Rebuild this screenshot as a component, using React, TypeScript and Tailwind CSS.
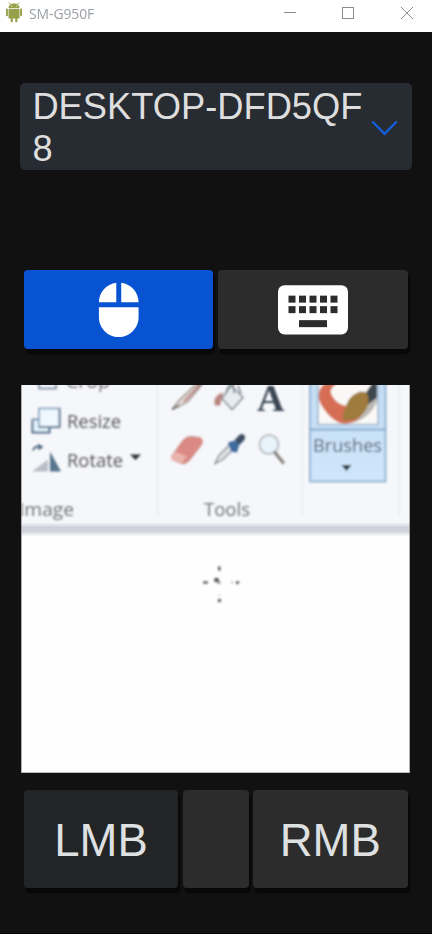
import React from "react";

function TitleBar() {
  return (
    <header className="flex h-8 shrink-0 items-start bg-white">
      <svg className="ml-[5px] mt-[2px] h-[21px] w-[18px]" viewBox="0 0 18 21" fill="#97a04b">
        <path d="M4 0.5 5.7 2.5M14 0.5 12.3 2.5" stroke="#97a04b" strokeWidth="1" />
        <path d="M3.5 6.2C3.5 3.5 5.7 1.5 9 1.5s5.5 2 5.5 4.7z" />
        <rect x="3.5" y="7" width="11" height="9.4" rx="0.7" />
        <rect x="1" y="6.6" width="1.9" height="7.6" rx="0.8" />
        <rect x="15.1" y="6.6" width="1.9" height="7.6" rx="0.8" />
        <rect x="5.6" y="15" width="2.2" height="5.2" rx="0.9" />
        <rect x="10.2" y="15" width="2.2" height="5.2" rx="0.9" />
        <circle cx="6.7" cy="4.1" r="0.5" fill="#fff" />
        <circle cx="11.3" cy="4.1" r="0.5" fill="#fff" />
      </svg>
      <span className="ml-[6px] mt-[3px] origin-left scale-x-[0.93] font-['Open_Sans','Noto_Sans',sans-serif] text-[15px] leading-5 tracking-[-0.1px] text-[#9a9fa6]">
        SM-G950F
      </span>
      <svg className="ml-auto mr-[18px] mt-[6px] h-[14px] w-[131px]" viewBox="0 0 131 14" fill="none" stroke="#8c8c8c">
        <path d="M1 6.5h12" />
        <rect x="59.5" y="1.5" width="11" height="11" />
        <path d="M118 1l12 12M130 1L118 13" />
      </svg>
    </header>
  );
}

function MouseIcon() {
  return (
    <svg className="h-[59.500px] w-[59.500px]" viewBox="0 0 24 24" fill="#fff">
      <path d="M13 1.07V9h7c0-4.08-3.05-7.44-7-7.93zM4 15c0 4.42 3.58 8 8 8s8-3.58 8-8v-4H4v4zm7-13.93C7.05 1.56 4 4.92 4 9h7V1.07z" />
    </svg>
  );
}

function KeyboardIcon() {
  const columns = [3, 6, 9, 12, 15];
  return (
    <svg className="h-[50px] w-[70px]" viewBox="0 0 20 14.2">
      <rect width="20" height="14.1" rx="1.9" fill="#fff" />
      {columns.map((x) => (
        <g key={x} fill="#2c2c2c">
          <rect x={x} y="3" width="2" height="2" />
          <rect x={x} y="6" width="2" height="2" />
        </g>
      ))}
      <rect x="6" y="10" width="8" height="2" fill="#2c2c2c" />
    </svg>
  );
}

function RemoteView() {
  return (
    <svg
      className="ml-[21px] mt-[35.500px] block h-[388px] w-[389px] shrink-0"
      viewBox="21 385.5 389 388"
      fontFamily="'Open Sans','Noto Sans',sans-serif"
    >
      <defs>
        <filter id="soft" x="-5%" y="-5%" width="110%" height="110%">
          <feGaussianBlur stdDeviation="0.8" />
        </filter>
        <linearGradient id="ribbonEdge" x1="0" y1="0" x2="0" y2="1">
          <stop offset="0" stopColor="#f4f5f8" />
          <stop offset="0.35" stopColor="#ccd1d9" />
          <stop offset="0.65" stopColor="#d0d5dd" />
          <stop offset="1" stopColor="#fefefe" />
        </linearGradient>
        <linearGradient id="brushBg" x1="0" y1="0" x2="0" y2="1">
          <stop offset="0" stopColor="#c4ddf3" />
          <stop offset="1" stopColor="#cfe5fa" />
        </linearGradient>
      </defs>
      <rect x="21" y="384" width="389" height="390" fill="#fefefe" />
      <rect x="21" y="384" width="389" height="140" fill="#f6f7fa" />
      <rect x="21" y="523" width="389" height="14" fill="url(#ribbonEdge)" />

      <g filter="url(#soft)">
        <g stroke="#e7eaef" strokeWidth="1.5">
          <path d="M157.500 380V517M302.500 380V517M399 380V517" />
        </g>
        <path d="M39 384v5h17M56 380v10" stroke="#8d9caf" strokeWidth="2" fill="none" />
        <text x="66" y="388.500" fontSize="18" fill="#777" textLength="44" lengthAdjust="spacingAndGlyphs">Crop</text>

        <rect x="32.500" y="420" width="17" height="13" fill="#e3f1fb" stroke="#647b95" strokeWidth="1.7" />
        <rect x="39" y="409" width="20.500" height="18.500" fill="#eff8ff" stroke="#7b9ab9" strokeWidth="1.6" />
        <path d="M59.500 409v18.500H39M49.500 428v5h-17v-11" stroke="#4e6885" strokeWidth="1.6" fill="none" />
        <text x="67" y="428" fontSize="18" fill="#565656" textLength="54" lengthAdjust="spacingAndGlyphs">Resize</text>

        <path d="M33 451c1-4 5-5 8-3" stroke="#546d85" strokeWidth="2" fill="none" />
        <path d="M38 444l5.500 3.500-5 3.500z" fill="#546d85" />
        <path d="M32 472l16-12v12z" fill="#b7bfc7" />
        <path d="M50 452l11 20H50z" fill="#58758e" />
        <text x="67" y="467.500" fontSize="18" fill="#565656" textLength="56" lengthAdjust="spacingAndGlyphs">Rotate</text>
        <path d="M130 455h11l-5.500 5.500z" fill="#333" />
        <text x="19" y="516" fontSize="18" fill="#707276" textLength="55" lengthAdjust="spacingAndGlyphs">Image</text>
        <text x="204" y="516" fontSize="18" fill="#707276" textLength="46" lengthAdjust="spacingAndGlyphs">Tools</text>

        <path d="M172 410l8-10 16-15h6l-14 17-9 5z" fill="#e2dad7" stroke="#928783" strokeWidth="1.300" />
        <path d="M184 402l16-17" stroke="#b66f66" strokeWidth="1.800" />
        <path d="M172 410l7-4" stroke="#77736f" strokeWidth="1.800" />
        <path d="M222 399l9-13 12 12-11 12z" fill="#e6edf3" stroke="#899097" strokeWidth="1.600" />
        <path d="M226 394c2-9 5-10 7-10l1 10M238 386l3 8" stroke="#7d858d" fill="none" strokeWidth="1.500" />
        <path d="M215 406c-2-6 1-11 8-13l-1 6-2 7z" fill="#b98780" />
        <text x="257" y="411" fontFamily="'Liberation Serif',serif" fontWeight="700" fontSize="38" fill="#3a4655">A</text>

        <path d="M172 456l10-14c3-4 6-5 10-5l8 1c3 2 3 5 1 8l-10 13c-3 4-6 6-10 5l-7-3c-2-1-3-3-2-5z" fill="#db8983" stroke="#c99995" />
        <path d="M172 456l3-4 12 5-6 7-8-3c-2-1-2-3-1-5z" fill="#e9b4ac" />
        <path d="M215 464l4-8 12-12 4 4-12 12z" fill="#dfe3e6" stroke="#858b90" strokeWidth="1.300" />
        <path d="M228 443l7-2 4-5c3-3 8 0 5 5l-5 5-2 7-6-1z" fill="#3f6b9e" />
        <path d="M235 440l4-4c3-3 8 0 5 4l-5 5z" fill="#405060" />
        <circle cx="269" cy="445" r="9.500" fill="#e8f3fa" stroke="#bac1c8" strokeWidth="2" />
        <path d="M275 453l8 10" stroke="#8d8884" strokeWidth="3.500" strokeLinecap="round" />

        <rect x="310" y="378" width="75.500" height="104" fill="url(#brushBg)" stroke="#8bafd2" strokeWidth="1.800" />
        <path d="M310 430h75" stroke="#86abce" strokeWidth="1.800" />
        <rect x="318" y="375" width="60" height="50" fill="#faf9f7" stroke="#9bb4ce" strokeWidth="1.500" />
        <path d="M362 400l10-14h5v16c-4 10-13 19-24 21l-9-1z" fill="#bdb9b4" />
        <path d="M364 396l8-12h5v14l-9 7z" fill="#3e474e" />
        <path d="M325 384c-7 5-8 13-4 21 5 9 13 17 21 19 9 1 17-3 20-10l-10-9c-8 4-17-2-21-11-1-5 2-7 6-10z" fill="#d66e55" />
        <path d="M343 421c-1-4 0-9 3-14 2-8 8-14 16-15 8 0 8 11 4 18-4 8-14 12-23 11z" fill="#9e7b3c" />
        <text x="313" y="452.500" fontSize="18" fill="#525d70" textLength="69" lengthAdjust="spacingAndGlyphs">Brushes</text>
        <path d="M341.500 465.500h10l-5 6z" fill="#25303c" />

        <g fill="#555">
          <ellipse cx="219.300" cy="569" rx="1.300" ry="2.600" />
          <ellipse cx="216.500" cy="580.500" rx="2.500" ry="2.200" />
          <ellipse cx="219" cy="583" rx="1.500" ry="1.500" fill="#888" />
          <ellipse cx="205.500" cy="583" rx="2.700" ry="1.300" />
          <ellipse cx="237.500" cy="583" rx="1.700" ry="1.500" />
          <circle cx="232" cy="583" r="1" fill="#aaa" />
          <circle cx="219.500" cy="601" r="1.700" />
          <circle cx="219.500" cy="596" r="1" fill="#ccc" />
        </g>
      </g>
      <path d="M21 773.200h389M21.500 384v389M409.500 384v389" stroke="#8b8b8b" strokeWidth="0.700" />
    </svg>
  );
}

export default function App() {
  return (
    <div className="flex h-[934px] w-[432px] flex-col overflow-hidden bg-[#111111] font-['Liberation_Sans',Arial,sans-serif]">
      <TitleBar />
      <button className="ml-[19.500px] mt-[51px] flex h-[86.500px] w-[392px] shrink-0 items-center rounded-[5px] bg-[#272c32] pl-[12.900px] text-left">
        <span className="w-[338.500px] shrink-0 break-all pt-[4px] text-[36.300px] leading-[42px] text-[#dedede]">
          DESKTOP-DFD5QF<br />8
        </span>
        <svg className="mt-[4px] h-[16px] w-[27px] shrink-0" viewBox="0 0 27 16" fill="none" stroke="#1260df" strokeWidth="2.300">
          <path d="M1.300 1.500 13.500 13.800 25.700 1.500" />
        </svg>
      </button>

      <div className="ml-[23.500px] mt-[100.500px] flex h-[79px] w-[384px] shrink-0 gap-[4.500px]">
        <button className="flex flex-1 items-center justify-center rounded-[4px] bg-[#0753d2] shadow-[2px_5px_1px_#080808]">
          <MouseIcon />
        </button>
        <button className="flex flex-1 items-center justify-center rounded-[4px] bg-[#2c2c2c] shadow-[2px_5px_1px_#080808]">
          <KeyboardIcon />
        </button>
      </div>

      <RemoteView />

      <div className="ml-[24px] mt-[17.500px] flex h-[98px] w-[383.500px] shrink-0 gap-[4.500px] text-[45.500px] leading-none text-[#dfe0e1]">
        <button className="flex w-[154px] items-center justify-center rounded-[4px] bg-[#232425] pt-[3px] shadow-[2px_5px_1px_#080808]">
          LMB
        </button>
        <button className="flex-1 rounded-[4px] bg-[#2c2c2c] shadow-[2px_5px_1px_#080808]" />
        <button className="flex w-[154.500px] items-center justify-center rounded-[4px] bg-[#2c2c2c] pt-[3px] shadow-[2px_5px_1px_#080808]">
          RMB
        </button>
      </div>
      <div className="mt-auto h-px shrink-0 bg-black" />
    </div>
  );
}
